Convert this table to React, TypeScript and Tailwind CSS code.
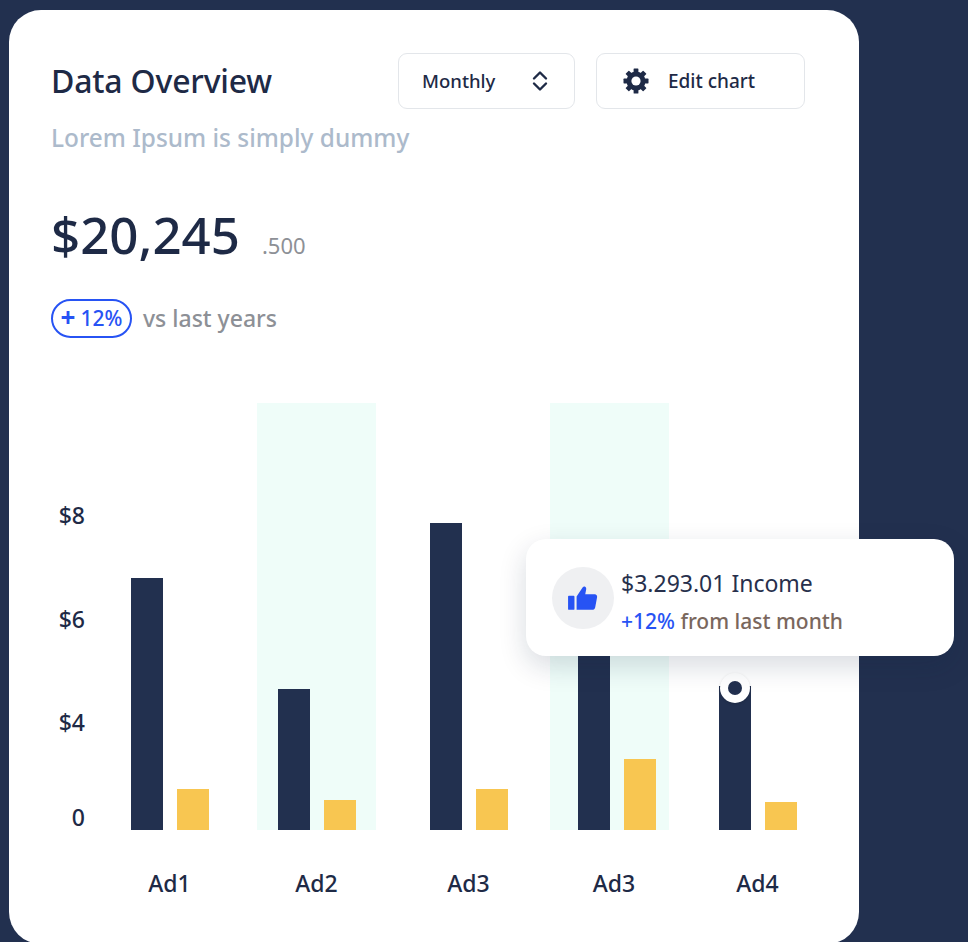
import { ReactNode } from "react";

type Group = {
  label: string;
  navy: number;
  gold: number;
  shift: string;
  inner?: string;
  highlight?: boolean;
  marker?: boolean;
};

const groups: Group[] = [
  { label: "Ad1", navy: 252, gold: 41, shift: "" },
  { label: "Ad2", navy: 141, gold: 30, shift: "", highlight: true },
  { label: "Ad3", navy: 307, gold: 41, shift: "ml-[5px]" },
  { label: "Ad3", navy: 200, gold: 71, shift: "-ml-[6px]", inner: "pl-[14px]", highlight: true },
  { label: "Ad4", navy: 144, gold: 28, shift: "ml-[1px]", marker: true },
];

const GearIcon = () => (
  <svg width="28" height="28" viewBox="0 0 28 28">
    <g fill="#1e2a46">
      <circle cx="14" cy="14" r="9.5" />
      {[0, 45, 90, 135, 180, 225, 270, 315].map((a) => (
        <rect key={a} x="11.6" y="1.5" width="4.8" height="5" rx="0.6" transform={`rotate(${a} 14 14)`} />
      ))}
    </g>
    <circle cx="14" cy="14" r="4.6" fill="white" />
  </svg>
);

const UpDownIcon = () => (
  <svg width="16" height="22" viewBox="0 0 16 22" fill="none" stroke="#1e2a46" strokeWidth="2.4" strokeLinecap="round" strokeLinejoin="round">
    <path d="M2 8.5 8 2.5l6 6" />
    <path d="M2 13.5 8 19.5l6-6" />
  </svg>
);

const ThumbIcon = () => (
  <svg width="32" height="30" viewBox="0 0 30 28" fill="#2753f4">
    <rect x="1" y="12" width="6" height="13" rx="0.8" />
    <path d="M9 25V12.5L14.6 4.2C15.2 3.3 16.2 3 17 3.4C17.9 3.9 18.2 4.9 18 5.9L17.1 10.6H26C27.5 10.6 28.5 11.9 28.2 13.3L26.4 22.8C26.1 24.1 25 25 23.7 25Z" />
  </svg>
);

const Button = ({ children, className }: { children: ReactNode; className?: string }) => (
  <button className={`h-[56px] flex items-center rounded-[9px] border border-[#e3e6ea] bg-white font-medium text-[#1e2a46] ${className ?? ""}`}>
    {children}
  </button>
);

export default function App() {
  return (
    <div className="min-h-screen bg-[#22304f] pl-[9px] pt-[10px] font-['Noto_Sans',sans-serif] overflow-hidden">
      <div className="relative w-[850px] h-[934px] rounded-[32px] bg-white pl-[42px] pr-[54px] pt-[43px]">
        {/* Header */}
        <div className="flex items-start justify-between">
          <h1 className="text-[32px] font-medium leading-[56px] tracking-[-0.2px] text-[#1e2a46]">Data Overview</h1>
          <div className="flex shrink-0 gap-[21px]">
            <Button className="w-[177px] pl-[23px] pr-[26px] justify-between text-[18.5px]">
              <span>Monthly</span>
              <UpDownIcon />
            </Button>
            <Button className="w-[209px] pl-[25px] gap-[18px] text-[19px]">
              <GearIcon />
              <span>Edit chart</span>
            </Button>
          </div>
        </div>
        <p className="mt-[13px] whitespace-nowrap text-[24.4px] font-medium leading-[32px] text-[#acbacb]">Lorem Ipsum is simply dummy</p>

        {/* Amount */}
        <div className="mt-[55px] flex items-baseline gap-[22px]">
          <span className="text-[51px] font-medium leading-none text-[#1e2a46]">$20,245</span>
          <span className="text-[22px] leading-none text-[#8d9096]">.500</span>
        </div>

        <div className="mt-[39px] flex items-center gap-[11px]">
          <span className="flex h-[39px] w-[81px] items-center justify-center gap-[5px] rounded-full border-2 border-[#2753f4] font-medium text-[#2753f4]">
            <span className="text-[26px] font-bold leading-none -mt-[4px]">+</span>
            <span className="text-[21px] leading-none">12%</span>
          </span>
          <span className="text-[23px] font-medium leading-none text-[#8d9096]">vs last years</span>
        </div>

        {/* Chart */}
        <div className="mt-[65px] flex">
          <div className="w-[34px] shrink-0 flex flex-col items-end text-[23px] font-medium leading-[24px] text-[#1e2a46]">
            <span className="mt-[100px]">$8</span>
            <span className="mt-[80px]">$6</span>
            <span className="mt-[79px]">$4</span>
            <span className="mt-[71px]">0</span>
          </div>
          <div className="ml-[25px] flex shrink-0 flex-col">
            <div className="flex gap-[28px]">
              {groups.map((g, i) => (
                <div
                  key={i}
                  className={`flex h-[427px] w-[119px] items-end justify-center gap-[14px] ${g.shift} ${g.inner ?? ""} ${g.highlight ? "bg-[#effdf9]" : ""}`}
                >
                  <div className="relative w-[32px] bg-[#22304f]" style={{ height: g.navy }}>
                    {g.marker && (
                      <div className="absolute left-1/2 -top-[13px] flex h-[30px] w-[30px] -translate-x-1/2 items-center justify-center rounded-full bg-white shadow-[0_1px_3px_rgba(0,0,0,0.15)]">
                        <div className="h-[14px] w-[14px] rounded-full bg-[#22304f]" />
                      </div>
                    )}
                  </div>
                  <div className="w-[32px] bg-[#f8c651]" style={{ height: g.gold }} />
                </div>
              ))}
            </div>
            <div className="mt-[38px] flex gap-[28px]">
              {groups.map((g, i) => (
                <span key={i} className={`w-[119px] text-center text-[23px] font-medium leading-[30px] text-[#1e2a46] ${g.shift} ${g.inner ? "pl-[9px]" : ""}`}>
                  {g.label}
                </span>
              ))}
            </div>
          </div>
        </div>

        {/* Tooltip */}
        <div className="absolute left-[517px] top-[529px] flex h-[117px] w-[428px] items-center gap-[7px] rounded-[20px] bg-white pl-[26px] shadow-[0_10px_28px_rgba(15,30,60,0.16)]">
          <div className="flex h-[62px] w-[62px] items-center justify-center rounded-full bg-[#eff0f2]">
            <ThumbIcon />
          </div>
          <div className="flex flex-col whitespace-nowrap pt-[8px]">
            <span className="text-[23px] leading-[38px] text-[#27304c]">$3.293.01 Income</span>
            <span className="text-[21px] font-medium leading-[38px] text-[#7a675d]">
              <span className="text-[#2753f4]">+12%</span> from last month
            </span>
          </div>
        </div>
      </div>
    </div>
  );
}
